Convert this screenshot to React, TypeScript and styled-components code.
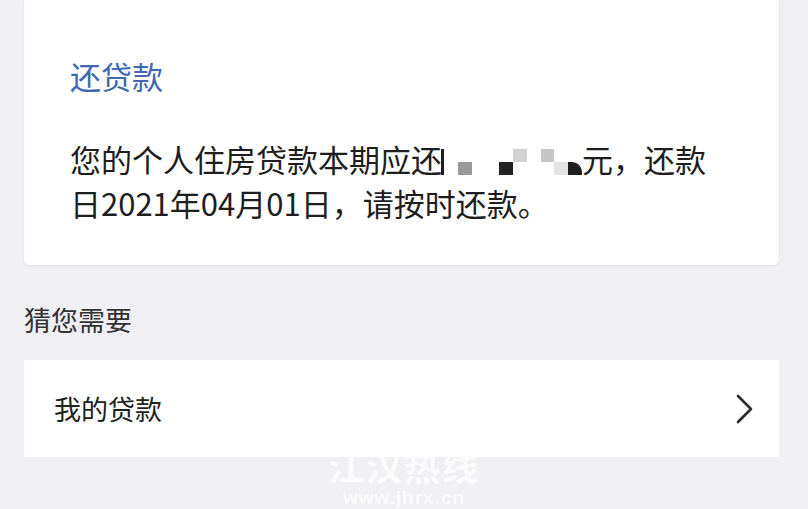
import React from "react";
import styled, { createGlobalStyle } from "styled-components";

const GlobalStyle = createGlobalStyle`
  html, body {
    margin: 0;
    padding: 0;
    background: #efeff4;
  }
  body {
    font-family: "Noto Sans CJK SC", "Noto Sans", sans-serif;
    -webkit-font-smoothing: antialiased;
  }
`;

const Page = styled.div`
  position: relative;
  min-height: 509px;
  overflow: hidden;
  padding: 0 29px 0 24px;
  box-sizing: border-box;
`;

const NoticeCard = styled.section`
  background: #fff;
  border-radius: 0 0 5px 5px;
  box-shadow: 0 1px 3px rgba(0, 0, 0, 0.08);
  padding: 53px 20px 40px 46px;
`;

const CardTitle = styled.h2`
  margin: 0;
  font-size: 31px;
  font-weight: 400;
  line-height: 45px;
  color: #3f67b2;
`;

const CardBody = styled.p`
  margin: 39px 0 0;
  font-size: 31px;
  line-height: 44px;
  color: #1e1e1e;
  white-space: nowrap;
`;

const Mosaic = styled.span`
  display: inline-grid;
  grid-template-columns: 3px repeat(10, 13.8px);
  grid-template-rows: 13px 13px;
  vertical-align: -3px;
  margin-left: -1px;
`;

const Tile = styled.span<{ $col: number; $row: number; $span?: number; $shade: string }>`
  grid-column: ${({ $col }) => $col};
  grid-row: ${({ $row, $span }) => ($span ? `${$row} / span ${$span}` : $row)};
  background: ${({ $shade }) => $shade};
`;

const CurvedTile = styled(Tile)`
  border-top-right-radius: 10px;
`;

const SectionLabel = styled.h3`
  margin: 35px 0 0;
  font-size: 27px;
  font-weight: 400;
  line-height: 39px;
  color: #333;
`;

const LinkRow = styled.a`
  margin-top: 21px;
  height: 97px;
  background: #fff;
  display: flex;
  align-items: center;
  justify-content: space-between;
  padding: 0 26px 0 30px;
  text-decoration: none;
  font-size: 27px;
  color: #222;
`;

const Chevron = styled.svg`
  width: 18px;
  height: 30px;
  display: block;
`;

const Watermark = styled.div`
  position: absolute;
  left: 0;
  right: 0;
  top: 446px;
  display: flex;
  flex-direction: column;
  align-items: center;
  gap: 4px;
  color: rgba(255, 255, 255, 0.75);
  font-weight: 700;
  pointer-events: none;
`;

const WatermarkName = styled.span`
  font-size: 36px;
  line-height: 38px;
  letter-spacing: 2px;
`;

const WatermarkUrl = styled.span`
  font-family: "Liberation Sans", Arial, sans-serif;
  font-size: 19px;
  line-height: 20px;
  letter-spacing: 1px;
`;

const mosaicTiles = [
  { col: 2, row: 2, shade: "#999" },
  { col: 5, row: 2, shade: "#222" },
  { col: 6, row: 1, shade: "#d2d2d2" },
  { col: 8, row: 1, shade: "#c6c6c6" },
  { col: 9, row: 2, shade: "#e3e3e3" },
];

const App = () => {
  return (
    <>
      <GlobalStyle />
      <Page>
        <NoticeCard>
          <CardTitle>还贷款</CardTitle>
          <CardBody>
            您的个人住房贷款本期应还
            <Mosaic>
              <Tile $col={1} $row={1} $span={2} $shade="#1e1e1e" />
              {mosaicTiles.map((t, i) => (
                <Tile key={i} $col={t.col + 1} $row={t.row} $shade={t.shade} />
              ))}
              <CurvedTile $col={11} $row={2} $shade="#1e1e1e" />
            </Mosaic>
            元，还款
            <br />
            日2021年04月01日，请按时还款。
          </CardBody>
        </NoticeCard>

        <SectionLabel>猜您需要</SectionLabel>
        <LinkRow href="#">
          <span>我的贷款</span>
          <Chevron viewBox="0 0 18 30">
            <polyline
              points="3,2 16,15 3,28"
              fill="none"
              stroke="#2a2a2a"
              strokeWidth="2.6"
              strokeLinecap="round"
              strokeLinejoin="round"
            />
          </Chevron>
        </LinkRow>
      </Page>
      <Watermark>
        <WatermarkName>江汉热线</WatermarkName>
        <WatermarkUrl>www.jhrx.cn</WatermarkUrl>
      </Watermark>
    </>
  );
};

export default App;
